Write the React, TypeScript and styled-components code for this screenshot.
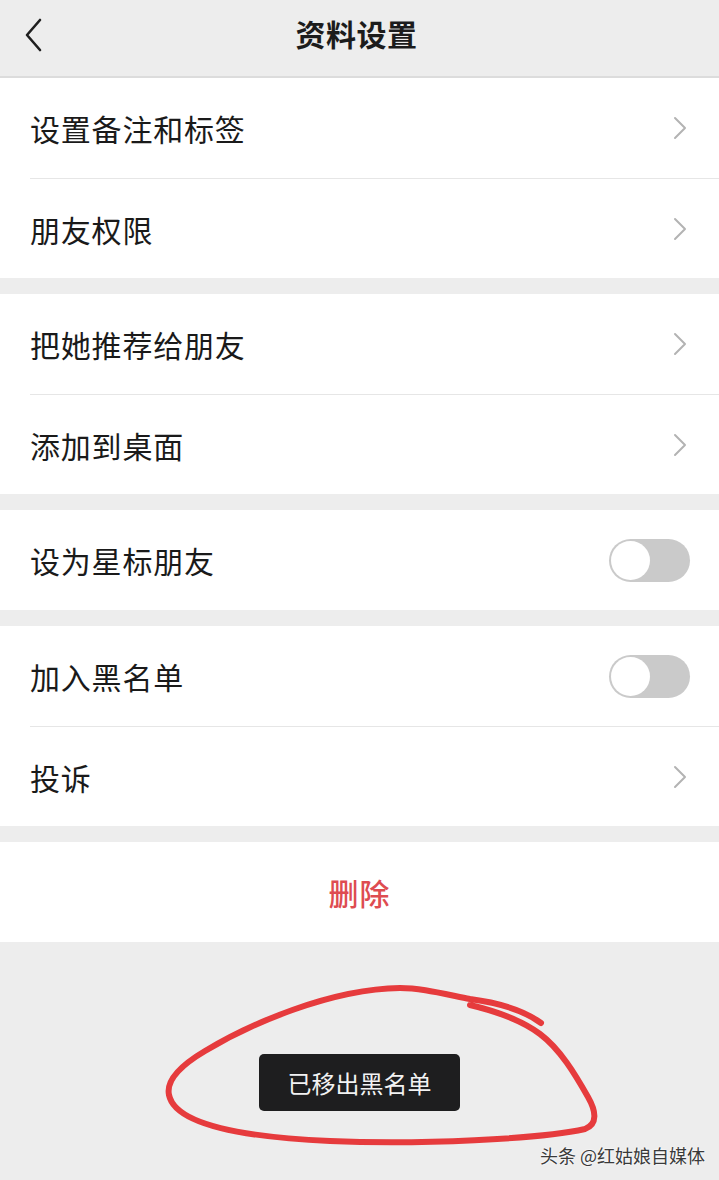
import styled, { createGlobalStyle } from 'styled-components'

const GlobalStyle = createGlobalStyle`
  html, body {
    margin: 0;
    padding: 0;
    background: #ededed;
  }
  body {
    font-family: "Noto Sans CJK SC", "Noto Sans", sans-serif;
  }
`

type RowItem = { label: string; kind: 'arrow' | 'toggle' }

const groups: RowItem[][] = [
  [
    { label: '设置备注和标签', kind: 'arrow' },
    { label: '朋友权限', kind: 'arrow' },
  ],
  [
    { label: '把她推荐给朋友', kind: 'arrow' },
    { label: '添加到桌面', kind: 'arrow' },
  ],
  [{ label: '设为星标朋友', kind: 'toggle' }],
  [
    { label: '加入黑名单', kind: 'toggle' },
    { label: '投诉', kind: 'arrow' },
  ],
]

const Chevron = () => (
  <svg width="14" height="24" viewBox="0 0 14 24" fill="none">
    <path d="M2 2 L12 12 L2 22" stroke="#b3b3b3" strokeWidth="2" strokeLinecap="round" strokeLinejoin="round" />
  </svg>
)

const BackIcon = () => (
  <svg width="22" height="34" viewBox="0 0 22 34" fill="none">
    <path d="M17 2 L4 17 L17 32" stroke="#1f1f1f" strokeWidth="2.6" strokeLinecap="round" strokeLinejoin="round" />
  </svg>
)

const App = () => {
  return (
    <Page>
      <GlobalStyle />
      <Header>
        <BackButton>
          <BackIcon />
        </BackButton>
        <Title>资料设置</Title>
      </Header>

      {groups.map((g, gi) => (
        <Group key={gi}>
          {g.map((r, ri) => (
            <Row key={ri} divider={ri > 0}>
              <Label>{r.label}</Label>
              {r.kind === 'arrow' ? <Chevron /> : <Switch><Knob /></Switch>}
            </Row>
          ))}
        </Group>
      ))}

      <Group>
        <DeleteRow>删除</DeleteRow>
      </Group>

      <Bottom>
        <Scribble width="719" height="237" viewBox="0 943 719 237" fill="none">
          <path
            d="M541 1024 C 525 1012, 500 1004, 470 1000
               C 440 994, 420 989, 400 989
               C 330 990, 250 1025, 205 1052
               C 178 1068, 166 1082, 169 1096
               C 175 1125, 240 1138, 330 1142
               C 420 1146, 540 1140, 585 1130
               C 598 1125, 596 1112, 588 1098
               C 575 1075, 560 1050, 540 1035
               C 520 1020, 495 1012, 470 1006"
            stroke="#e63b3d"
            strokeWidth="6"
            strokeLinecap="round"
            strokeLinejoin="round"
          />
        </Scribble>
        <Toast>已移出黑名单</Toast>
        <Watermark>头条 @红姑娘自媒体</Watermark>
      </Bottom>
    </Page>
  )
}

export default App

const Page = styled.div`
  width: 719px;
  min-height: 1180px;
  background: #ededed;
  display: flex;
  flex-direction: column;
`

const Header = styled.header`
  position: relative;
  height: 76px;
  display: flex;
  align-items: center;
  justify-content: center;
  border-bottom: 2px solid #dcdcdc;
  background: #ededed;
`

const BackButton = styled.div`
  position: absolute;
  left: 23px;
  top: 18px;
  display: flex;
`

const Title = styled.h1`
  margin: 0;
  font-size: 30px;
  font-weight: 700;
  color: #1c1c1c;
  line-height: 1;
  margin-top: -10px;
  margin-left: -6px;
  letter-spacing: 0.5px;
`

const Group = styled.section`
  background: #fff;
  margin-bottom: 16px;
`

const Row = styled.div<{ divider: boolean }>`
  height: 100px;
  box-sizing: border-box;
  margin-left: 30px;
  padding-right: 32px;
  display: flex;
  align-items: center;
  justify-content: space-between;
  border-top: ${p => (p.divider ? '1px solid #e6e6e6' : 'none')};
`

const Label = styled.span`
  font-size: 30px;
  color: #1a1a1a;
  letter-spacing: 0.8px;
`

const Switch = styled.div`
  width: 81px;
  height: 43px;
  border-radius: 22px;
  background: #cacaca;
  box-sizing: border-box;
  padding: 2px;
  margin-right: -3px;
  display: flex;
  align-items: center;
`

const Knob = styled.div`
  width: 39px;
  height: 39px;
  border-radius: 50%;
  background: #fff;
`

const DeleteRow = styled.div`
  height: 100px;
  display: flex;
  align-items: center;
  justify-content: center;
  font-size: 30px;
  font-weight: 500;
  color: #de4c51;
  letter-spacing: 1px;
`

const Bottom = styled.div`
  position: relative;
  flex: 1;
  margin-top: -16px;
  height: 237px;
`

const Scribble = styled.svg`
  position: absolute;
  left: 0;
  top: 0;
`

const Toast = styled.div`
  position: absolute;
  left: 259px;
  top: 112px;
  width: 201px;
  height: 57px;
  border-radius: 5px;
  background: #1e1e1f;
  color: #f2f2f2;
  font-size: 24px;
  display: flex;
  align-items: center;
  justify-content: center;
`

const Watermark = styled.div`
  position: absolute;
  right: 14px;
  bottom: 12px;
  font-size: 18px;
  color: #3a3a3a;
  text-shadow: 0 0 2px #fff, 0 0 2px #fff;
`
